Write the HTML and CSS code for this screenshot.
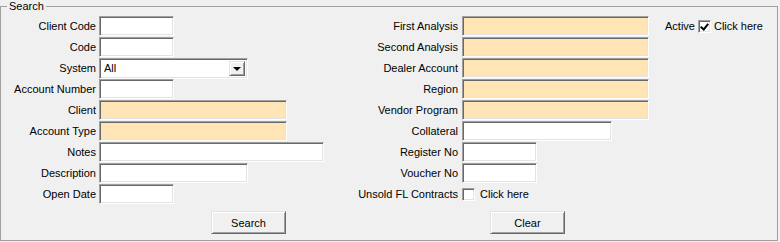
FILE: index.html
```html
<!DOCTYPE html>
<html lang="en">

<head>
  <meta charset="UTF-8">
  <title>Search</title>
  <link rel="stylesheet" href="styles.css">
</head>

<body>
  <fieldset class="search-box">
    <legend>Search</legend>
    <div class="search-grid">
      <label class="lbl">Client Code</label>
      <div class="fld"><input type="text" class="w75"></div>
      <label class="lbl right">First Analysis</label>
      <div class="fld right"><input type="text" class="w187 req"></div>
      <div class="active">
        <span>Active</span>
        <span class="check checked"></span>
        <span>Click here</span>
      </div>

      <label class="lbl">Code</label>
      <div class="fld"><input type="text" class="w75"></div>
      <label class="lbl right">Second Analysis</label>
      <div class="fld right"><input type="text" class="w187 req"></div>

      <label class="lbl">System</label>
      <div class="fld">
        <div class="combo w149">
          <span class="combo-text">All</span>
          <span class="combo-btn"></span>
        </div>
      </div>
      <label class="lbl right">Dealer Account</label>
      <div class="fld right"><input type="text" class="w187 req"></div>

      <label class="lbl">Account Number</label>
      <div class="fld"><input type="text" class="w75"></div>
      <label class="lbl right">Region</label>
      <div class="fld right"><input type="text" class="w187 req"></div>

      <label class="lbl">Client</label>
      <div class="fld"><input type="text" class="w188 req"></div>
      <label class="lbl right">Vendor Program</label>
      <div class="fld right"><input type="text" class="w187 req"></div>

      <label class="lbl">Account Type</label>
      <div class="fld"><input type="text" class="w188 req"></div>
      <label class="lbl right">Collateral</label>
      <div class="fld right"><input type="text" class="w150"></div>

      <label class="lbl">Notes</label>
      <div class="fld"><input type="text" class="w225"></div>
      <label class="lbl right">Register No</label>
      <div class="fld right"><input type="text" class="w75"></div>

      <label class="lbl">Description</label>
      <div class="fld"><input type="text" class="w149"></div>
      <label class="lbl right">Voucher No</label>
      <div class="fld right"><input type="text" class="w75"></div>

      <label class="lbl">Open Date</label>
      <div class="fld"><input type="text" class="w75"></div>
      <label class="lbl right">Unsold FL Contracts</label>
      <div class="fld right unsold">
        <span class="check"></span>
        <span>Click here</span>
      </div>
    </div>

    <div class="buttons">
      <button type="button">Search</button>
      <button type="button">Clear</button>
    </div>
  </fieldset>
</body>

</html>
```

FILE: styles.css
```css
body {
  font-family: 'Liberation Sans', Arial, sans-serif;
  font-size: 11px;
  color: #000;
  background-color: #f0f0f0;
  margin: 0;
}

.search-box {
  box-sizing: border-box;
  width: 778px;
  height: 241px;
  margin: 0;
  padding: 3px 0 0 0;
  border: 1px solid #a0a0a0;
  min-inline-size: 0;
}

.search-box legend {
  margin-left: 6px;
  padding: 0 2px;
  line-height: 13px;
}

.search-grid {
  display: grid;
  grid-template-columns: 98px 241px 122px 200px auto;
  grid-auto-rows: 20px;
  row-gap: 1px;
  align-items: center;
}

.lbl {
  grid-column: 1;
  text-align: right;
  padding-right: 3px;
  white-space: nowrap;
}

.fld {
  grid-column: 2;
  display: flex;
  align-items: center;
}

.lbl.right {
  grid-column: 3;
  padding-right: 4px;
}

.fld.right {
  grid-column: 4;
}

.active {
  grid-column: 5;
  display: flex;
  align-items: center;
  padding-left: 3px;
  gap: 3px;
}

input[type="text"] {
  box-sizing: border-box;
  height: 20px;
  margin: 0;
  padding: 0 2px;
  font: inherit;
  background-color: #fff;
  border: 1px solid;
  border-color: #a0a0a0 #fff #fff #a0a0a0;
  box-shadow: inset 1px 1px #696969, inset -1px -1px #e3e3e3;
  outline: none;
}

input.req {
  background-color: #ffe4b5;
}

.w75 { width: 75px; }
.w149 { width: 149px; }
.w150 { width: 150px; }
.w187 { width: 187px; }
.w188 { width: 188px; }
.w225 { width: 225px; }

.combo {
  box-sizing: border-box;
  height: 21px;
  display: flex;
  align-items: center;
  justify-content: space-between;
  background-color: #fff;
  border: 1px solid;
  border-color: #a0a0a0 #fff #fff #a0a0a0;
  box-shadow: inset 1px 1px #696969, inset -1px -1px #e3e3e3;
  padding: 2px;
}

.combo-text {
  padding-left: 2px;
}

.combo-btn {
  position: relative;
  box-sizing: border-box;
  width: 16px;
  height: 15px;
  background-color: #f0f0f0;
  border: 1px solid;
  border-color: #e3e3e3 #696969 #696969 #e3e3e3;
  box-shadow: inset 1px 1px #fff, inset -1px -1px #a0a0a0;
}

.combo-btn::after {
  content: "";
  position: absolute;
  left: 3px;
  top: 5px;
  border-left: 4px solid transparent;
  border-right: 4px solid transparent;
  border-top: 4px solid #000;
}

.check {
  position: relative;
  box-sizing: border-box;
  width: 13px;
  height: 13px;
  background-color: #fff;
  border: 1px solid;
  border-color: #a0a0a0 #fff #fff #a0a0a0;
  box-shadow: inset 1px 1px #696969, inset -1px -1px #e3e3e3;
}

.check.checked::after {
  content: "";
  position: absolute;
  left: 3px;
  top: 1px;
  width: 3px;
  height: 6px;
  border-right: 2px solid #000;
  border-bottom: 2px solid #000;
  transform: rotate(40deg);
}

.unsold {
  gap: 5px;
}

.buttons {
  display: flex;
  gap: 204px;
  margin: 7px 0 0 210px;
}

button {
  box-sizing: border-box;
  width: 75px;
  height: 23px;
  font: inherit;
  color: #000;
  background-color: #f0f0f0;
  border: 1px solid;
  border-color: #e3e3e3 #696969 #696969 #e3e3e3;
  box-shadow: inset 1px 1px #fff, inset -1px -1px #a0a0a0;
  padding: 0;
}
```
